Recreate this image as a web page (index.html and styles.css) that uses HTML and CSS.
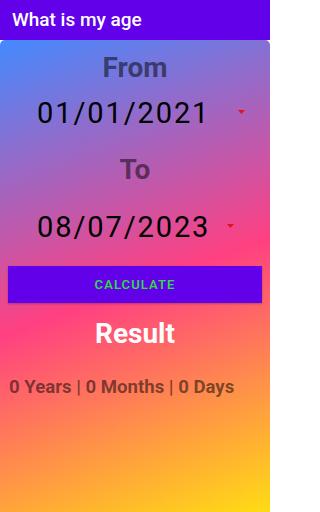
FILE: index.html
```html
<!DOCTYPE html>
<html lang="en">
<head>
<meta charset="utf-8">
<title>What is my age</title>
<link rel="stylesheet" href="styles.css">
</head>
<body>
<div class="app">
  <header class="toolbar">What is my age</header>
  <main class="card">
    <div class="label label-from">From</div>
    <div class="date-row date-row-from">
      <span class="date">01/01/2021</span>
      <svg class="arrow" width="7" height="4" viewBox="0 0 7 4"><polygon points="0,0 7,0 3.5,4" fill="#e8101c"/></svg>
    </div>
    <div class="label label-to">To</div>
    <div class="date-row date-row-to">
      <span class="date">08/07/2023</span>
      <svg class="arrow" width="7" height="4" viewBox="0 0 7 4"><polygon points="0,0 7,0 3.5,4" fill="#e8101c"/></svg>
    </div>
    <button class="calc" type="button">CALCULATE</button>
    <div class="result-title">Result</div>
    <div class="result-line">0 Years | 0 Months | 0 Days</div>
  </main>
</div>
</body>
</html>
```
FILE: styles.css
```css
html, body {
  margin: 0;
  padding: 0;
  background: #ffffff;
}
body {
  font-family: Roboto, "Liberation Sans", sans-serif;
  width: 270px;
  height: 512px;
  overflow: hidden;
}
.app {
  display: flex;
  flex-direction: column;
  height: 512px;
}
.toolbar {
  height: 40px;
  flex: 0 0 40px;
  background: #6200ea;
  color: #ffffff;
  font-size: 19px;
  font-weight: 500;
  line-height: 40px;
  padding-left: 12px;
  box-sizing: border-box;
}
.card {
  flex: 1 1 auto;
  display: flex;
  flex-direction: column;
  border-radius: 5px 5px 0 0;
  background: linear-gradient(160deg, #448aff 0%, #ff4081 52%, #ffdc14 100%);
}
.label {
  font-size: 28px;
  font-weight: 700;
  line-height: 32px;
  text-align: center;
  color: rgba(0, 0, 0, 0.52);
}
.label-from {
  margin-top: 12px;
}
.label-to {
  margin-top: 23px;
}
.date-row {
  display: flex;
  align-items: center;
  height: 36px;
  padding-left: 37px;
}
.date-row-from {
  margin-top: 11px;
}
.date-row-to {
  margin-top: 23px;
}
.date {
  display: inline-block;
  width: 190px;
  font-size: 29px;
  line-height: 36px;
  letter-spacing: 1.9px;
  color: #000000;
}
.arrow {
  display: block;
  margin-top: -3px;
}
.date-row-from .arrow {
  margin-left: 11px;
}
.date-row-to .arrow {
  margin-left: 0;
}
.calc {
  margin: 21px 8px 0 8px;
  height: 37px;
  border: none;
  border-radius: 0;
  background: #6200ea;
  color: #2fe03a;
  font-family: Roboto, "Liberation Sans", sans-serif;
  font-size: 13px;
  font-weight: 500;
  letter-spacing: 1.1px;
  box-shadow: 0 1px 2px rgba(0, 0, 0, 0.25);
  padding: 0;
}
.result-title {
  margin-top: 15px;
  font-size: 28px;
  font-weight: 700;
  line-height: 32px;
  text-align: center;
  color: #ffffff;
}
.result-line {
  margin-top: 27px;
  padding-left: 9px;
  font-size: 18.6px;
  font-weight: 700;
  line-height: 20px;
  color: rgba(0, 0, 0, 0.52);
}
```
